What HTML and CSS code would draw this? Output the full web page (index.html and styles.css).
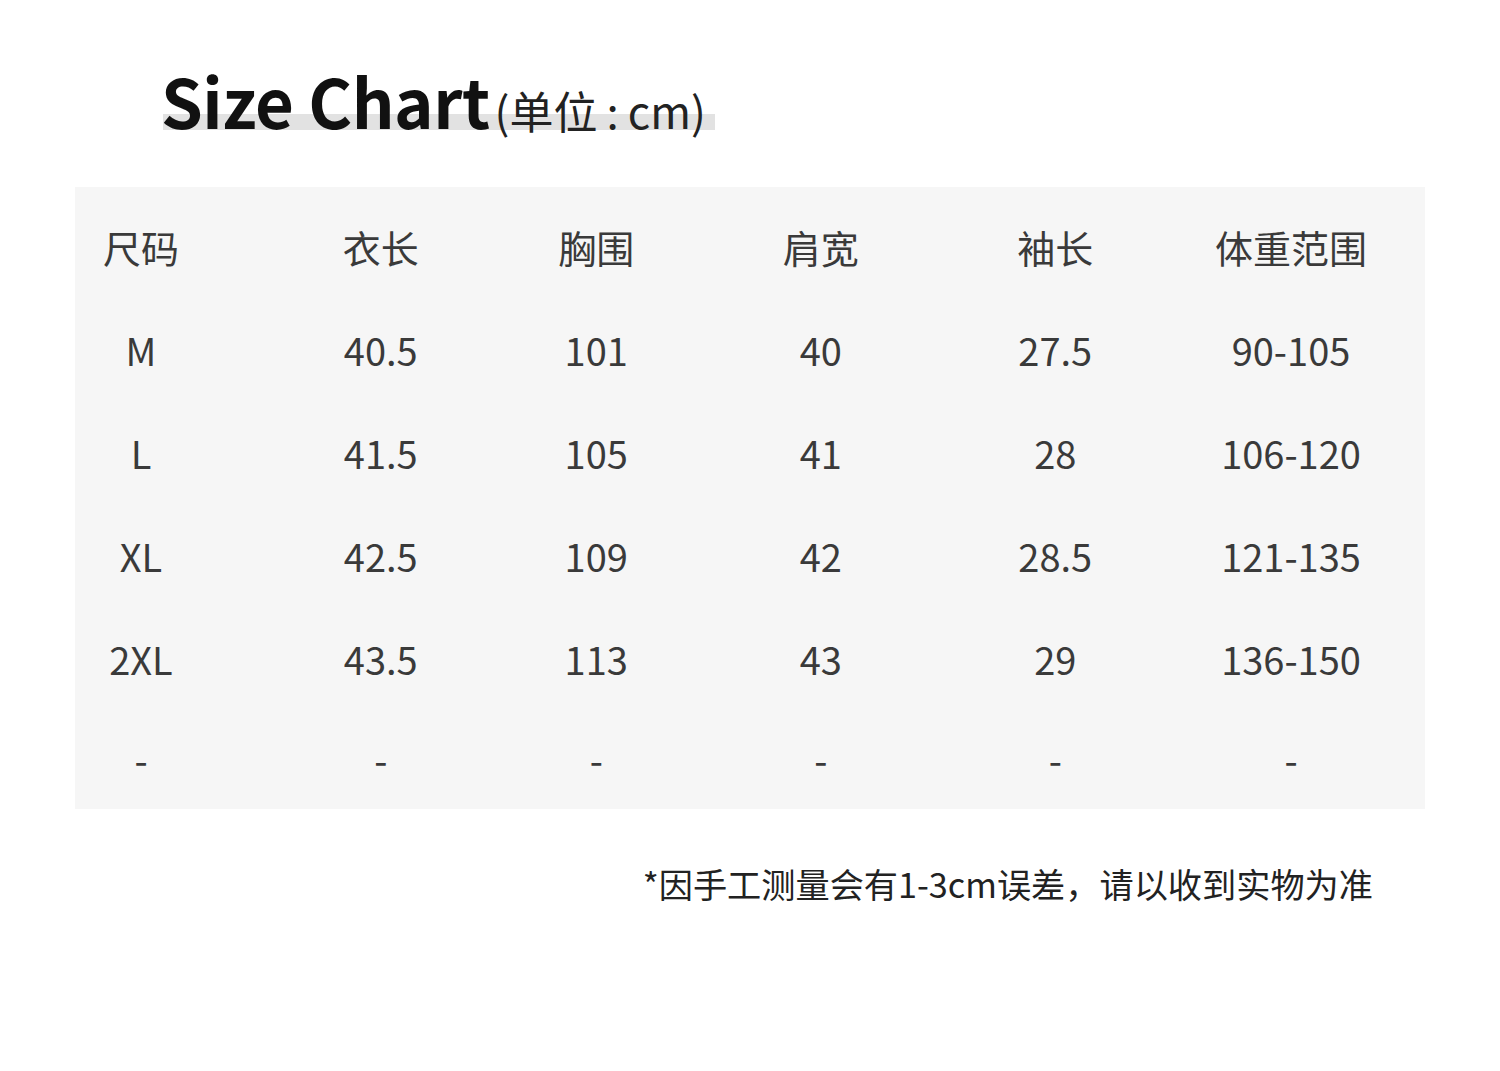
FILE: index.html
```html
<!DOCTYPE html>
<html lang="zh-CN">
<head>
<meta charset="utf-8">
<title>Size Chart</title>
<link rel="stylesheet" href="styles.css">
</head>
<body>
<div class="page">
  <div class="title-row">
    <h1 class="title"><span class="title-main">Size Chart</span><span class="title-unit">(单位<span class="colon">:</span>cm)</span></h1>
  </div>
  <div class="chart">
    <div class="cell c1">尺码</div><div class="cell c2">衣长</div><div class="cell c3">胸围</div><div class="cell c4">肩宽</div><div class="cell c5">袖长</div><div class="cell c6">体重范围</div>
    <div class="cell c1">M</div><div class="cell c2">40.5</div><div class="cell c3">101</div><div class="cell c4">40</div><div class="cell c5">27.5</div><div class="cell c6">90-105</div>
    <div class="cell c1">L</div><div class="cell c2">41.5</div><div class="cell c3">105</div><div class="cell c4">41</div><div class="cell c5">28</div><div class="cell c6">106-120</div>
    <div class="cell c1">XL</div><div class="cell c2">42.5</div><div class="cell c3">109</div><div class="cell c4">42</div><div class="cell c5">28.5</div><div class="cell c6">121-135</div>
    <div class="cell c1">2XL</div><div class="cell c2">43.5</div><div class="cell c3">113</div><div class="cell c4">43</div><div class="cell c5">29</div><div class="cell c6">136-150</div>
    <div class="cell c1">-</div><div class="cell c2">-</div><div class="cell c3">-</div><div class="cell c4">-</div><div class="cell c5">-</div><div class="cell c6">-</div>
  </div>
  <p class="note">*因手工测量会有1-3cm误差，请以收到实物为准</p>
</div>
</body>
</html>
```
FILE: styles.css
```css
* { box-sizing: border-box; }
html, body { margin: 0; padding: 0; background: #ffffff; }
body {
  font-family: "Noto Sans CJK SC", "Noto Sans", sans-serif;
  color: #333333;
}
.page {
  width: 1500px;
  height: 1071px;
  padding: 0 75px;
}
.title-row {
  height: 187px;
  padding-top: 66px;
  padding-left: 86px;
}
.title {
  margin: 0;
  display: inline-block;
  position: relative;
  line-height: 1;
  font-weight: 700;
  color: #111111;
  white-space: nowrap;
}
.title::before {
  content: "";
  position: absolute;
  left: 2px;
  right: -9px;
  top: 48px;
  height: 16px;
  background: #e2e2e2;
  z-index: 0;
}
.title-main {
  position: relative;
  z-index: 1;
  font-size: 67px;
  letter-spacing: -0.5px;
}
.title-unit {
  position: relative;
  z-index: 1;
  font-size: 44px;
  font-weight: 400;
  color: #222222;
  margin-left: 5px;
}
.colon {
  margin: 0 9px;
}
.chart {
  background: #f6f6f6;
  height: 622px;
  padding-top: 8px;
  display: grid;
  grid-template-columns: 186px 227.5px 219.5px 229.5px 235.5px 252px;
  grid-template-rows: repeat(5, 103px) 97px;
  align-items: center;
  font-size: 38px;
  line-height: 1;
  color: #3a3a3a;
}
.cell { text-align: center; }
.c1 { padding-right: 54px; }
.c2 { padding-left: 12px; }
.c3 { padding-right: 4px; }
.c4 { padding-right: 4px; }
.c6 { padding-right: 16px; }
.note {
  margin: 54px 52px 0 0;
  text-align: right;
  font-size: 34.2px;
  line-height: 1.2;
  color: #222222;
}
```
